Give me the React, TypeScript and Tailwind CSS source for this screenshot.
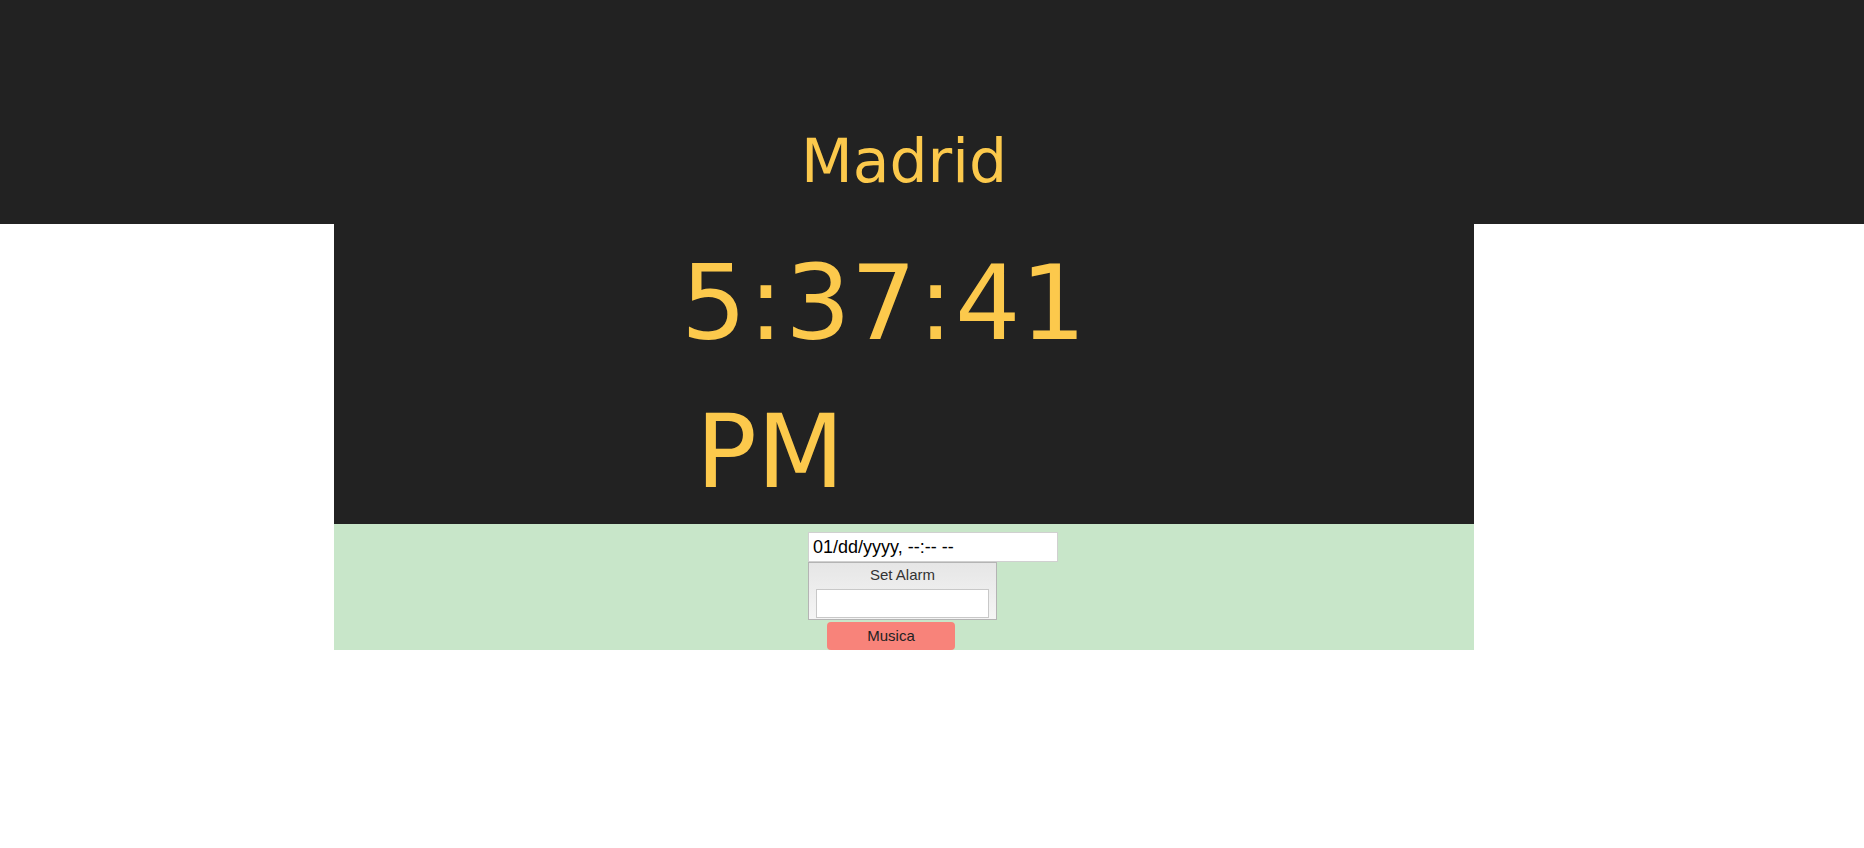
import React from 'react';

const yellow = 'text-[#fcc94c]';

function App() {
  return (
    <div className="min-h-screen w-full bg-white">
      {/* header band */}
      <header className="h-[224px] w-full bg-[#222222]">
        <div className="ml-[334px] w-[1140px] pt-[131px]">
          <h1 className={`text-center text-[60px] leading-none font-normal ${yellow} [font-family:'DejaVu_Sans',sans-serif]`}>
            Madrid
          </h1>
        </div>
      </header>

      <div className="ml-[334px] w-[1140px]">
        {/* clock */}
        <div className={`h-[300px] bg-[#222222] pt-[28px] ${yellow} [font-family:'DejaVu_Sans',sans-serif]`}>
          <div className="pl-[347px] text-[103px] leading-none">
            5<span className="px-[2px]">:</span>37<span className="px-[2px]">:</span>41
          </div>
          <div className="mt-[47px] pl-[362px] text-[101px] leading-none">PM</div>
        </div>

        {/* alarm controls */}
        <div className="h-[126px] bg-[#c8e6c9] pl-[474px] pt-[8px] [font-family:'Liberation_Sans',Arial,sans-serif]">
          <div className="flex h-[30px] w-[250px] items-center border border-[#d0d0d0] bg-white px-[4px] text-[18px] text-black">
            01/dd/yyyy, --:-- --
          </div>
          <div className="flex h-[58px] w-[189px] flex-col items-center border border-[#b4b4b4] bg-gradient-to-b from-[#e6e6e6] to-[#f5f5f5] pt-[2px]">
            <span className="text-[15px] leading-[20px] text-[#333]">Set Alarm</span>
            <div className="mt-[4px] h-[29px] w-[173px] border border-[#c8c8c8] bg-white" />
          </div>
          <button className="ml-[19px] mt-[2px] flex h-[28px] w-[128px] items-center justify-center rounded-[4px] bg-[#f8837a] text-[15px] text-[#222]">
            Musica
          </button>
        </div>
      </div>
    </div>
  );
}

export default App;
